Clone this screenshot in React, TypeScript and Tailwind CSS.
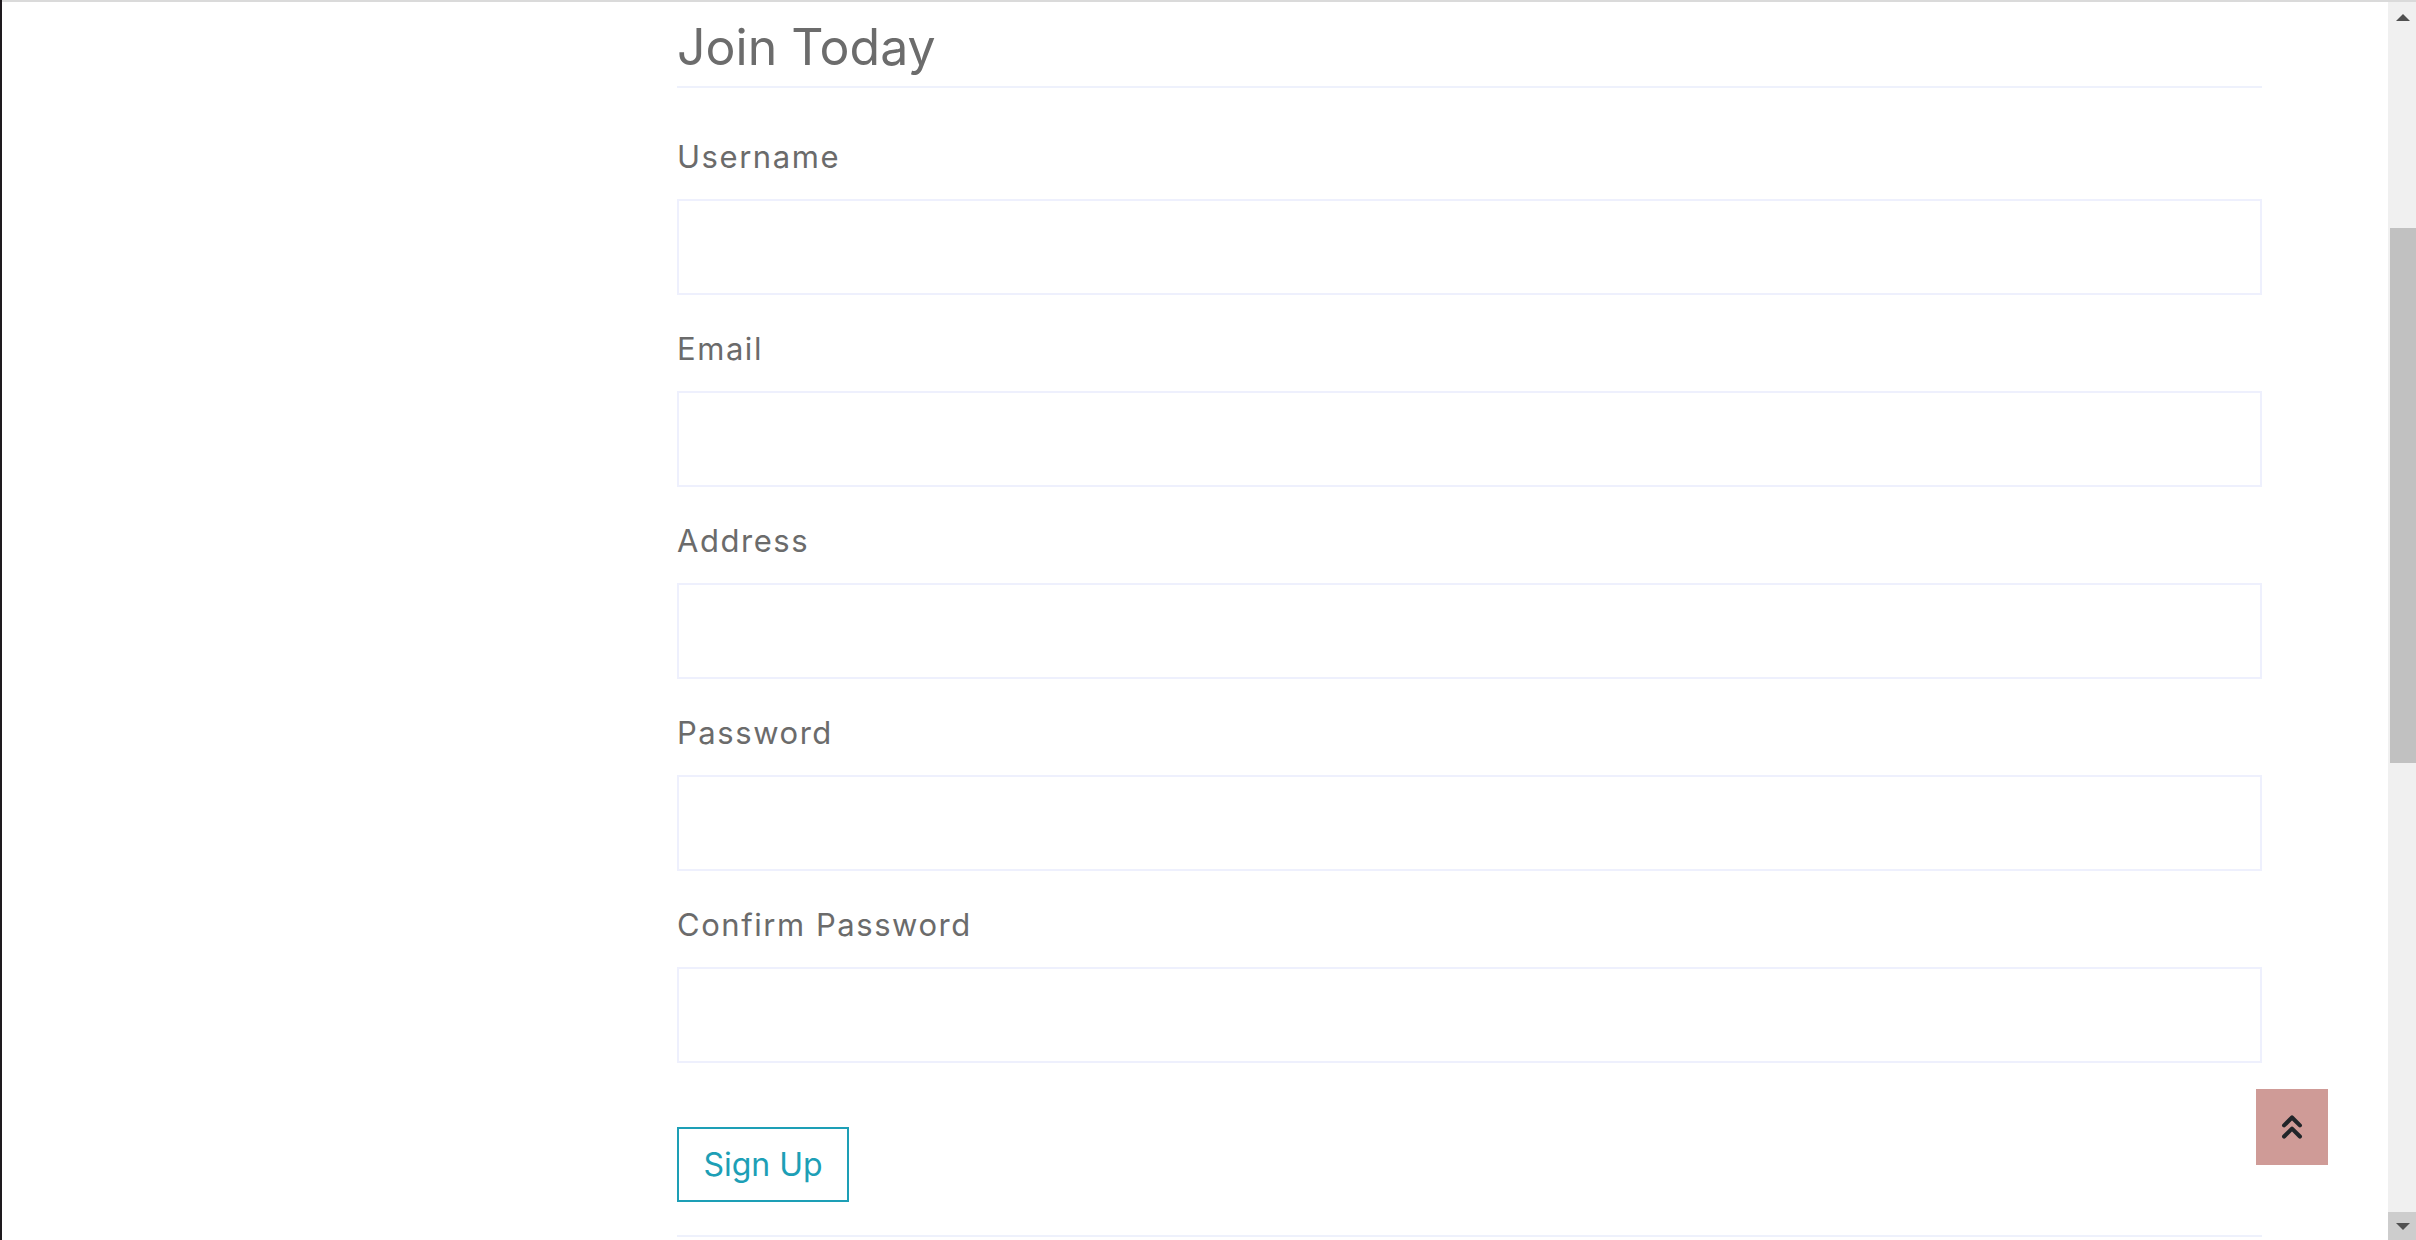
import React from 'react';
import { ChevronsUp } from 'lucide-react';

const fields = ['Username', 'Email', 'Address', 'Password', 'Confirm Password'];

export default function App() {
  return (
    <div className="relative flex h-[1240px] w-full overflow-hidden bg-white font-['Inter',sans-serif] text-[#6b6b6b]">
      {/* window edge */}
      <div className="w-[2px] shrink-0 bg-[#1e1a1e]" />

      <div className="flex min-w-0 flex-1 flex-col border-t-2 border-[#dadada]">
        <div className="flex flex-1">
          <main className="flex-1 pl-[675px]">
            <div className="w-[1585px]">
              <h2 className="mt-[15px] border-b-2 border-[#eef1fc] pb-[8px] text-[50px] font-normal leading-[61px] text-[#6c6c6c]">
                Join Today
              </h2>

              <form className="mt-[46px]" onSubmit={(e) => e.preventDefault()}>
                {fields.map((label) => (
                  <div key={label} className="mb-[31px]">
                    <label className="mb-[20px] block text-[31px] leading-[45px] tracking-[0.05em]">{label}</label>
                    <input
                      type={label.includes('Password') ? 'password' : 'text'}
                      className="block h-[96px] w-full border-2 border-[#eef0fd] bg-white px-4 outline-none"
                    />
                  </div>
                ))}

                <button
                  type="submit"
                  className="mt-[33px] h-[75px] w-[172px] border-2 border-[#1d9fb6] text-[32px] text-[#1d9fb6]"
                >
                  Sign Up
                </button>
              </form>

              <div className="mt-[33px] h-[2px] bg-[#eef1fc]" />
            </div>
          </main>

          {/* scrollbar */}
          <div className="flex w-[28px] shrink-0 flex-col bg-[#f0f0f0]">
            <div className="flex h-[28px] items-start justify-center pt-[12px] pl-[2px]">
              <div className="h-0 w-0 border-x-[7px] border-b-[7px] border-x-transparent border-b-[#505050]" />
            </div>
            <div className="ml-[2px] mt-[198px] h-[535px] bg-[#c1c1c1]" />
            <div className="flex-1" />
            <div className="flex h-[28px] items-start justify-center bg-[#cdcdcd] pt-[11px] pl-[2px]">
              <div className="h-0 w-0 border-x-[7px] border-t-[7px] border-x-transparent border-t-[#505050]" />
            </div>
          </div>
        </div>
      </div>

      <button
        type="button"
        className="absolute bottom-[75px] right-[88px] flex h-[76px] w-[72px] items-center justify-center bg-[#cf9b97] text-[#212529]"
      >
        <ChevronsUp size={38} strokeWidth={2.6} />
      </button>
    </div>
  );
}
